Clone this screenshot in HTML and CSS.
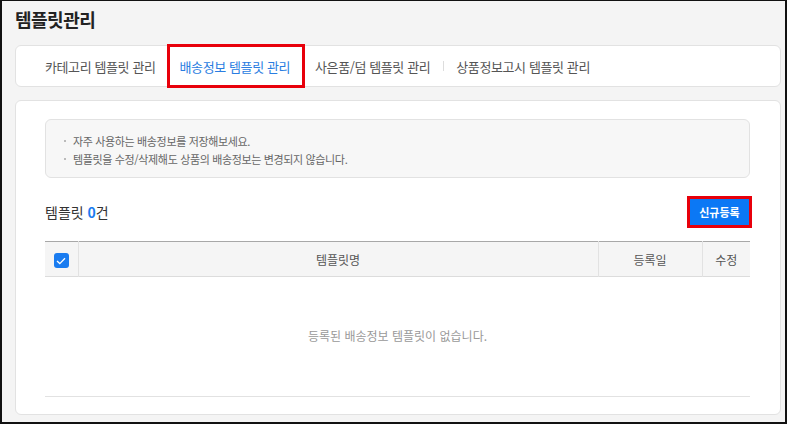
FILE: index.html
```html
<!DOCTYPE html>
<html lang="ko">
<head>
<meta charset="utf-8">
<link rel="stylesheet" href="styles.css">
</head>
<body>
<div class="page">
  <h1 class="title">템플릿관리</h1>
  <nav class="tabs">
    <a class="tab">카테고리 템플릿 관리</a>
    <a class="tab tab-active">배송정보 템플릿 관리</a>
    <a class="tab">사은품/덤 템플릿 관리</a>
    <span class="tab-sep"></span>
    <a class="tab">상품정보고시 템플릿 관리</a>
  </nav>
  <section class="card">
    <ul class="notice">
      <li>자주 사용하는 배송정보를 저장해보세요.</li>
      <li>템플릿을 수정/삭제해도 상품의 배송정보는 변경되지 않습니다.</li>
    </ul>
    <div class="list-head">
      <div class="count">템플릿 <strong>0</strong>건</div>
      <button class="btn-new">신규등록</button>
    </div>
    <table class="grid">
      <thead>
        <tr>
          <th class="col-check"><span class="checkbox"><svg width="10" height="8" viewBox="0 0 10 8"><polyline points="1,4 3.8,6.6 9,1.2" fill="none" stroke="#fff" stroke-width="1.3"/></svg></span></th>
          <th class="col-name">템플릿명</th>
          <th class="col-date">등록일</th>
          <th class="col-edit">수정</th>
        </tr>
      </thead>
      <tbody>
        <tr><td class="empty" colspan="4">등록된 배송정보 템플릿이 없습니다.</td></tr>
      </tbody>
    </table>
  </section>
</div>
</body>
</html>
```
FILE: styles.css
```css
* { box-sizing: border-box; }
html, body { margin: 0; padding: 0; }
body {
  width: 787px;
  height: 424px;
  overflow: hidden;
  background: #f4f4f4;
  border-top: 1px solid #111;
  border-left: 2px solid #111;
  border-right: 2px solid #111;
  border-bottom: 2px solid #111;
  font-family: "Noto Sans CJK KR", "Noto Sans", sans-serif;
  color: #333;
}
.page {
  padding: 6px 4px 0 13px;
}
.title {
  margin: 0;
  font-size: 18px;
  line-height: 24px;
  font-weight: 700;
  color: #222;
  letter-spacing: -0.5px;
}
.tabs {
  margin-top: 14px;
  height: 42px;
  background: #fff;
  border: 1px solid #e2e2e2;
  border-radius: 6px;
  display: flex;
  align-items: center;
  padding-left: 17px;
}
.tab {
  height: 40px;
  display: flex;
  align-items: center;
  padding: 0 13px 0 12px;
  font-size: 13px;
  color: #555;
  letter-spacing: -0.4px;
}
.tab-active {
  color: #2a7de1;
  outline: 3px solid #e8000b;
  outline-offset: -1px;
  padding: 0 13px 0 11px;
}
.tab-sep {
  width: 1px;
  height: 10px;
  background: #ddd;
}
.card {
  margin-top: 13px;
  background: #fff;
  border: 1px solid #e2e2e2;
  border-radius: 6px;
  padding: 18px 30px 18px 29px;
  height: 315px;
}
.notice {
  margin: 0;
  list-style: none;
  background: #f7f7f7;
  border: 1px solid #e2e2e2;
  border-radius: 6px;
  padding: 12px 17px 9px 17px;
}
.notice li {
  font-size: 11px;
  line-height: 18px;
  color: #666;
  position: relative;
  padding-left: 10px;
  letter-spacing: -0.35px;
}
.notice li::before {
  content: "";
  position: absolute;
  left: 1px;
  top: 8px;
  width: 2px;
  height: 2px;
  background: #bbb;
}
.list-head {
  display: flex;
  align-items: center;
  justify-content: space-between;
  margin-top: 21px;
  height: 26px;
}
.count {
  font-size: 14px;
  color: #333;
}
.count strong {
  color: #1a7cf0;
  font-weight: 700;
}
.btn-new {
  font-family: inherit;
  height: 26px;
  width: 59px;
  margin-right: 1px;
  border: 0;
  background: #0b78f5;
  color: #fff;
  font-size: 11px;
  font-weight: 700;
  padding: 0;
  outline: 3px solid #e8000b;
  outline-offset: 0;
}
.grid {
  margin-top: 16px;
  width: 100%;
  border-collapse: collapse;
  table-layout: fixed;
}
.grid thead tr {
  background: #f5f5f5;
  border-top: 1px solid #a8a8a8;
  border-bottom: 1px solid #dcdcdc;
}
.grid th {
  height: 35px;
  font-size: 12px;
  font-weight: 400;
  color: #555;
  text-align: center;
  padding: 0;
  border-left: 1px solid #e2e2e2;
}
.grid th:first-child { border-left: 0; }
.col-check { width: 33px; }
.col-date { width: 104px; }
.col-edit { width: 48px; }
.checkbox {
  display: inline-flex;
  width: 15px;
  height: 15px;
  border-radius: 3px;
  background: #1a7cf0;
  align-items: center;
  justify-content: center;
  vertical-align: middle;
}
.checkbox svg { display: block; }
.empty {
  height: 120px;
  text-align: center;
  font-size: 12px;
  color: #999;
  border-bottom: 1px solid #e2e2e2;
  padding: 0 0 2px 0;
}
```
